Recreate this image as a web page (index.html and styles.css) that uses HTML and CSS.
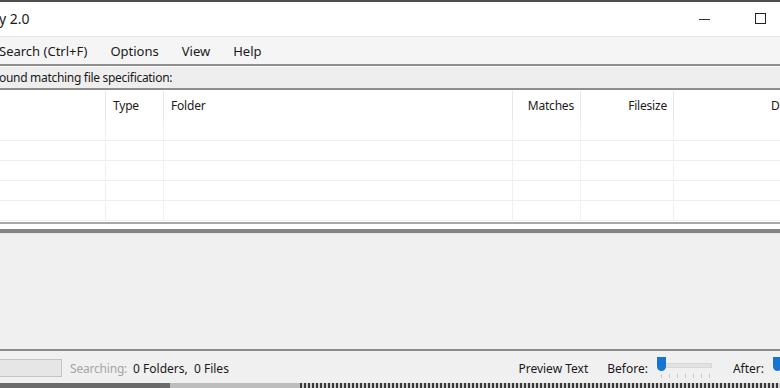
FILE: index.html
```html
<!DOCTYPE html>
<html lang="en">
<head>
    <meta charset="UTF-8">
    <title>Search 2.0</title>
    <link rel="stylesheet" href="styles.css">
</head>
<body>
    <div class="window">
        <!-- Barra de titulo -->
        <div class="titlebar">
            <span class="title">y 2.0</span>
            <div class="controls">
                <span class="btn-min"></span>
                <span class="btn-max"></span>
            </div>
        </div>

        <!-- Menu -->
        <div class="menubar">
            <span class="menu-item first">Search (Ctrl+F)</span>
            <span class="menu-item">Options</span>
            <span class="menu-item">View</span>
            <span class="menu-item">Help</span>
        </div>

        <div class="labelbar">ound matching file specification:</div>

        <!-- Lista de resultados -->
        <div class="results">
            <div class="grid">
                <div class="hcell"></div>
                <div class="hcell">Type</div>
                <div class="hcell">Folder</div>
                <div class="hcell right">Matches</div>
                <div class="hcell right">Filesize</div>
                <div class="hcell last">Da</div>
            </div>
            <div class="rows">
                <div class="row"><span></span><span></span><span></span><span></span><span></span><span></span></div>
                <div class="row"><span></span><span></span><span></span><span></span><span></span><span></span></div>
                <div class="row"><span></span><span></span><span></span><span></span><span></span><span></span></div>
                <div class="row"><span></span><span></span><span></span><span></span><span></span><span></span></div>
                <div class="row"><span></span><span></span><span></span><span></span><span></span><span></span></div>
            </div>
        </div>

        <div class="splitter"></div>

        <!-- Vista previa -->
        <div class="preview"></div>

        <!-- Barra de estado -->
        <div class="statusbar">
            <div class="progress"></div>
            <span class="muted">Searching:</span>
            <span class="count">0 Folders,&nbsp; 0 Files</span>
            <span class="spacer"></span>
            <span class="label">Preview Text</span>
            <span class="label before">Before:</span>
            <div class="slider">
                <span class="thumb"></span>
                <span class="ticks"></span>
            </div>
            <span class="label after">After:</span>
            <div class="slider short">
                <span class="thumb"></span>
            </div>
        </div>
        <div class="desk"></div>
    </div>
</body>
</html>
```

FILE: styles.css
```css
* {
    margin: 0;
    padding: 0;
    box-sizing: border-box;
}

body {
    width: 780px;
    height: 388px;
    overflow: hidden;
    background: #ffffff;
    font-family: 'Noto Sans', 'Open Sans', sans-serif;
    color: #1a1a1a;
}

.window {
    display: flex;
    flex-direction: column;
    height: 388px;
    border-top: 2px solid #4d4d4d;
}

.titlebar {
    height: 34px;
    background: #ffffff;
    display: flex;
    align-items: center;
    justify-content: space-between;
}

.title {
    font-size: 14px;
    margin-left: -1px;
    margin-top: -1px;
}

.controls {
    display: flex;
    align-items: center;
    gap: 45px;
    margin-right: 14px;
}

.btn-min {
    width: 11px;
    height: 1px;
    background: #333;
}

.btn-max {
    width: 11px;
    height: 11px;
    border: 1px solid #222;
    margin-top: -2px;
}

.menubar {
    height: 30px;
    background: #f5f5f5;
    border-top: 1px solid #e4e4e4;
    border-bottom: 2px solid #8e8e8e;
    display: flex;
    align-items: center;
    font-size: 13px;
    padding-top: 1px;
}

.menu-item {
    margin-left: 23px;
}

.menu-item.first {
    margin-left: -1px;
}

.labelbar {
    height: 24px;
    background: #eeeeee;
    border-top: 1px solid #fafafa;
    border-bottom: 2px solid #8e8e8e;
    font-size: 12px;
    letter-spacing: -0.3px;
    line-height: 21px;
    margin-left: -1px;
}

.results {
    height: 134px;
    background: #ffffff;
    border-top: 1px solid #ffffff;
    border-bottom: 2px solid #a8a8a8;
    overflow: hidden;
}

.grid,
.row {
    display: grid;
    grid-template-columns: 106px 58px 349px 68px 93px 107px;
}

.grid {
    height: 30px;
}

.hcell {
    font-size: 12px;
    letter-spacing: -0.2px;
    padding: 6px 6px 0 7px;
    border-right: 1px solid #e6e6e6;
    white-space: nowrap;
    overflow: hidden;
}

.hcell.right {
    text-align: right;
}

.hcell.last {
    border-right: none;
    padding-left: 97px;
}

.row {
    height: 20px;
    border-bottom: 1px solid #efefef;
}

.row span {
    border-right: 1px solid #f0f0f0;
}

.row span:last-child {
    border-right: none;
}

.splitter {
    height: 9px;
    background: #ffffff;
    border-bottom: 4px solid #848484;
}

.preview {
    flex: 1;
    background: #f0f0f0;
    border-top: 1px solid #e6e6e6;
    border-bottom: 2px solid #8a8a8a;
}

.statusbar {
    height: 32px;
    background: #f0f0f0;
    display: flex;
    align-items: center;
    font-size: 12px;
    padding-top: 3px;
}

.progress {
    width: 63px;
    height: 18px;
    margin-left: -1px;
    margin-top: -2px;
    background: #e6e6e6;
    border: 1px solid #c4c4c4;
    margin-right: 8px;
}

.muted {
    color: #a6a6a6;
    letter-spacing: -0.2px;
    margin-right: 6px;
}

.count {
    color: #1a1a1a;
}

.spacer {
    flex: 1;
}

.label {
    white-space: nowrap;
}

.before {
    margin-left: 19px;
}

.after {
    margin-left: 19px;
}

.slider {
    position: relative;
    width: 57px;
    height: 22px;
    margin-left: 9px;
    margin-top: -2px;
}

.slider::before {
    content: "";
    position: absolute;
    left: 2px;
    right: 2px;
    top: 6px;
    height: 3px;
    background: #e2e2e2;
    border: 1px solid #d8d8d8;
}

.slider.short {
    width: 7px;
    margin-left: 9px;
}

.slider.short::before {
    display: none;
}

.thumb {
    position: absolute;
    left: 0;
    top: 0;
    width: 9px;
    height: 14px;
    background: #1874d1;
    border-radius: 0 0 5px 5px;
}

.ticks {
    position: absolute;
    left: 4px;
    right: 4px;
    top: 17px;
    height: 4px;
    background: repeating-linear-gradient(90deg, #c8c8c8 0 1px, transparent 1px 8px);
}

.desk {
    height: 5px;
    background: linear-gradient(90deg, #6a6a6a 0 170px, #bdbdbd 170px 300px, transparent 300px),
        repeating-linear-gradient(90deg, #3a3a3a 0 2px, #d0d0d0 2px 4px);
}
```
